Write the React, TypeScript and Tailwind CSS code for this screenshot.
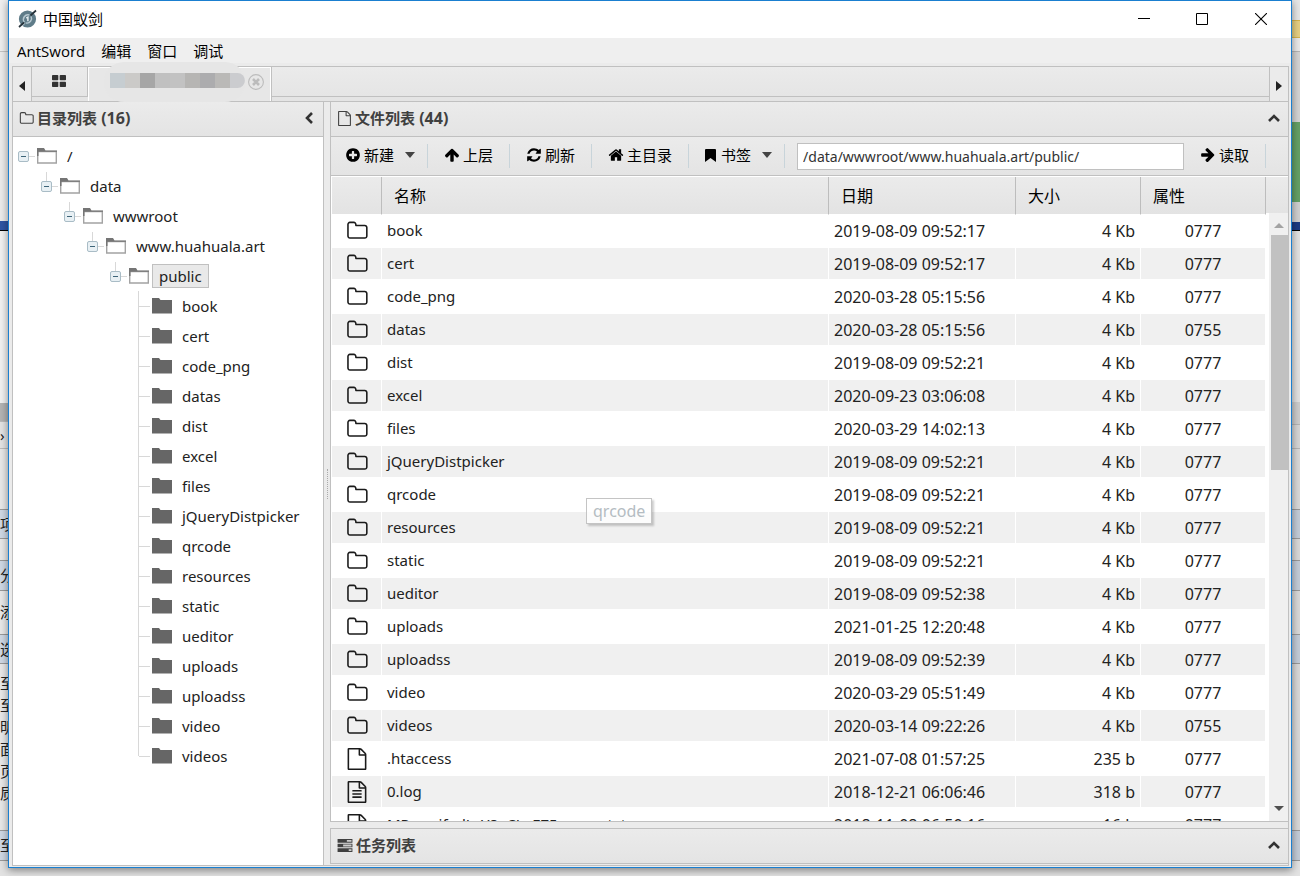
import type { ReactNode } from "react";

/* ---------- data ---------- */

const folders = [
  { name: "book", date: "2019-08-09 09:52:17", mode: "0777" },
  { name: "cert", date: "2019-08-09 09:52:17", mode: "0777" },
  { name: "code_png", date: "2020-03-28 05:15:56", mode: "0777" },
  { name: "datas", date: "2020-03-28 05:15:56", mode: "0755" },
  { name: "dist", date: "2019-08-09 09:52:21", mode: "0777" },
  { name: "excel", date: "2020-09-23 03:06:08", mode: "0777" },
  { name: "files", date: "2020-03-29 14:02:13", mode: "0777" },
  { name: "jQueryDistpicker", date: "2019-08-09 09:52:21", mode: "0777" },
  { name: "qrcode", date: "2019-08-09 09:52:21", mode: "0777" },
  { name: "resources", date: "2019-08-09 09:52:21", mode: "0777" },
  { name: "static", date: "2019-08-09 09:52:21", mode: "0777" },
  { name: "ueditor", date: "2019-08-09 09:52:38", mode: "0777" },
  { name: "uploads", date: "2021-01-25 12:20:48", mode: "0777" },
  { name: "uploadss", date: "2019-08-09 09:52:39", mode: "0777" },
  { name: "video", date: "2020-03-29 05:51:49", mode: "0777" },
  { name: "videos", date: "2020-03-14 09:22:26", mode: "0755" },
];

const rows = [
  ...folders.map((f) => ({ ...f, size: "4 Kb", icon: "folder" as IconName })),
  { name: ".htaccess", date: "2021-07-08 01:57:25", size: "235 b", mode: "0777", icon: "file" as IconName },
  { name: "0.log", date: "2018-12-21 06:06:46", size: "318 b", mode: "0777", icon: "fileText" as IconName },
  { name: "MP_verify_lLcY8aCLeEZ5manm.txt", date: "2018-11-08 06:50:16", size: "16 b", mode: "0777", icon: "fileText" as IconName },
];

// open branches of the tree, from the root down
const branches = [
  { name: "/", indent: "pl-[5px]" },
  { name: "data", indent: "pl-[28px]" },
  { name: "wwwroot", indent: "pl-[51px]" },
  { name: "www.huahuala.art", indent: "pl-[74px]" },
  { name: "public", indent: "pl-[97px]" },
];

/* ---------- icons ---------- */

type IconName = "folder" | "file" | "fileText" | "plus" | "up" | "refresh" | "home";

const FILE =
  "M1596 380q28 28 48 76t20 88v1152q0 40-28 68t-68 28h-1344q-40 0-68-28t-28-68v-1600q0-40 28-68t68-28h896q40 0 88 20t76 48zm-444-244v376h376q-10-29-22-41l-313-313q-12-12-41-22zm384 1528v-1024h-416q-40 0-68-28t-28-68v-416h-768v1536h1280z";

const paths: Record<IconName, string> = {
  folder:
    "M1632 1312v-704q0-40-28-68t-68-28h-704q-40 0-68-28t-28-68v-64q0-40-28-68t-68-28h-320q-40 0-68 28t-28 68v960q0 40 28 68t68 28h1216q40 0 68-28t28-68zm128-704v704q0 92-66 158t-158 66h-1216q-92 0-158-66t-66-158v-960q0-92 66-158t158-66h320q92 0 158 66t66 158v32h672q92 0 158 66t66 158z",
  file: FILE,
  fileText: FILE + "M544 736h704q32 0 32 32v64q0 32-32 32h-704q-32 0-32-32v-64q0-32 32-32zM544 992h704q32 0 32 32v64q0 32-32 32h-704q-32 0-32-32v-64q0-32 32-32zM544 1248h704q32 0 32 32v64q0 32-32 32h-704q-32 0-32-32v-64q0-32 32-32z",
  plus:
    "M1344 960v-128q0-26-19-45t-45-19h-256v-256q0-26-19-45t-45-19h-128q-26 0-45 19t-19 45v256h-256q-26 0-45 19t-19 45v128q0 26 19 45t45 19h256v256q0 26 19 45t45 19h128q26 0 45-19t19-45v-256h256q26 0 45-19t19-45zm320-64q0 209-103 385.5t-279.5 279.5-385.5 103-385.5-103-279.5-279.5-103-385.5 103-385.5 279.5-279.5 385.5-103 385.5 103 279.5 279.5 103 385.5z",
  up: "M1675 971q0 51-37 90l-75 75q-38 38-91 38-54 0-90-38l-294-293v704q0 52-37.5 84.5t-90.5 32.5h-128q-53 0-90.5-32.5t-37.5-84.5v-704l-294 293q-36 38-90 38t-90-38l-75-75q-38-38-38-90 0-53 38-91l651-651q35-37 90-37 54 0 91 37l651 651q37 39 37 91z",
  refresh:
    "M1639 1056q0 5-1 7-64 268-268 434.5t-478 166.5q-146 0-282.5-55t-243.5-157l-129 129q-19 19-45 19t-45-19-19-45v-448q0-26 19-45t45-19h448q26 0 45 19t19 45-19 45l-137 137q71 66 161 102t187 36q134 0 250-65t186-179q11-17 53-117 8-23 30-23h192q13 0 22.5 9.5t9.5 22.5zm25-800v448q0 26-19 45t-45 19h-448q-26 0-45-19t-19-45 19-45l138-138q-148-137-349-137-134 0-250 65t-186 179q-11 17-53 117-8 23-30 23h-199q-13 0-22.5-9.5t-9.5-22.5v-7q65-268 270-434.5t480-166.5q146 0 284 55.5t245 156.5l130-129q19-19 45-19t45 19 19 45z",
  home:
    "M1472 992v480q0 26-19 45t-45 19h-384v-384h-256v384h-384q-26 0-45-19t-19-45v-480q0-1 .5-3t.5-3l575-474 575 474q1 2 1 6zm223-69l-62 74q-8 9-21 11h-3q-13 0-21-7l-692-577-692 577q-12 8-24 7-13-2-21-11l-62-74q-8-10-7-23.5t11-21.5l719-599q32-26 76-26t76 26l244 204v-195q0-14 9-23t23-9h192q14 0 23 9t9 23v408l219 182q10 8 11 21.5t-7 23.5z",
};

function Icon({ name, className = "size-4" }: { name: IconName; className?: string }) {
  return (
    <svg viewBox="0 0 1792 1792" fill="currentColor" className={`shrink-0 ${className}`} aria-hidden="true">
      <path d={paths[name]} />
    </svg>
  );
}

function Chevron({ className = "" }: { className?: string }) {
  return (
    <svg viewBox="0 0 12 12" className={`size-3 ${className}`} fill="none" stroke="#333" strokeWidth="2.6" aria-hidden="true">
      <path d="M1 9 6 4l5 5" />
    </svg>
  );
}

function Caret() {
  return (
    <svg viewBox="0 0 10 6" className="ml-2 h-[6px] w-[10px]" fill="#444" aria-hidden="true">
      <path d="M0 0h10L5 6z" />
    </svg>
  );
}

function Logo() {
  return (
    <svg viewBox="0 0 20 20" className="size-5" aria-hidden="true">
      <circle cx="9.500" cy="10" r="8.600" fill="#5f7c89" />
      <path d="M6.400 13.200a4.600 4.600 0 0 1 5-7.200M13 7.400a4.600 4.600 0 0 1-5 6.600" fill="none" stroke="#b9cad2" strokeWidth="1.400" />
      <path d="M8.300 9l1.600-.8v4" fill="none" stroke="#e3ecef" strokeWidth="1.500" />
      <path d="M1 18 6 13.500M12.500 6.500 18 1.500" stroke="#26323a" strokeWidth="1.700" />
      <path d="M2.500 18.500 7.500 14" stroke="#dfe7ea" strokeWidth=".7" />
    </svg>
  );
}

/* ---------- desktop behind the window ---------- */

const strips = [
  { h: "h-[51px]", c: "bg-[#efefef]", t: "" },
  { h: "h-[170px]", c: "border-t border-[#c4c4c4] bg-[#ececec]", t: "" },
  { h: "h-[10px]", c: "border-b border-black bg-[#2f55a4]", t: "" },
  { h: "h-[172px]", c: "bg-[#f2f2f2]", t: "" },
  { h: "h-[18px]", c: "bg-[#b4b4b4]", t: "" },
  { h: "h-[28px]", c: "border-y border-[#bbb] bg-[#e4e4e4]", t: "›" },
  { h: "h-[60px]", c: "bg-[#e9e9e9]", t: "" },
  { h: "h-[30px]", c: "border-y border-[#999] bg-[#cfd9e5]", t: "项" },
  { h: "h-[21px]", c: "bg-[#e9e9e9]", t: "" },
  { h: "h-[31px]", c: "border-y border-[#999] bg-[#cfd9e5]", t: "分" },
  { h: "h-[43px]", c: "bg-[#e9e9e9]", t: "添" },
  { h: "h-[30px]", c: "border-y border-[#999] bg-[#cfd9e5]", t: "选" },
  { h: "h-[8px]", c: "bg-[#e9e9e9]", t: "" },
  { h: "h-[22px]", c: "bg-[#e9e9e9]", t: "至" },
  { h: "h-[22px]", c: "bg-[#e9e9e9]", t: "至" },
  { h: "h-[22px]", c: "bg-[#e9e9e9]", t: "明" },
  { h: "h-[22px]", c: "bg-[#e9e9e9]", t: "面" },
  { h: "h-[22px]", c: "bg-[#e9e9e9]", t: "页" },
  { h: "h-[22px]", c: "bg-[#e9e9e9]", t: "质" },
  { h: "h-[26px]", c: "bg-[#e9e9e9]", t: "" },
  { h: "h-[31px]", c: "border-y border-[#999] bg-[#cfd9e5]", t: "至" },
];

const rightStrips = [
  { h: "h-[20px]", c: "bg-[#e6e6e6]" },
  { h: "h-[18px]", c: "border-y border-[#d5b44e] bg-[#e6cf82]" },
  { h: "h-[13px]", c: "bg-[#e9e9e9]" },
  { h: "h-[71px]", c: "border-t border-[#b5b5b5] bg-[#d4d4d4]" },
  { h: "h-[80px]", c: "bg-[#65a066]" },
  { h: "h-[20px]", c: "bg-[#d0d0d0]" },
  { h: "h-[9px]", c: "border-b border-black bg-[#1b3a83]" },
  { h: "h-[171px]", c: "bg-[#e2e2e2]" },
  { h: "h-[22px]", c: "bg-[#cdcdcd]" },
  { h: "h-[25px]", c: "border-y border-[#b5b5b5] bg-[#d6d6d6]" },
  { h: "h-[60px]", c: "bg-[#d9d9d9]" },
  { h: "h-[30px]", c: "border-y border-[#999] bg-[#c3ccd8]" },
  { h: "h-[21px]", c: "bg-[#d9d9d9]" },
  { h: "h-[31px]", c: "border-y border-[#999] bg-[#c3ccd8]" },
  { h: "h-[43px]", c: "bg-[#d9d9d9]" },
  { h: "h-[30px]", c: "border-y border-[#999] bg-[#c3ccd8]" },
  { h: "h-[166px]", c: "bg-[#d9d9d9]" },
  { h: "h-[31px]", c: "border-y border-[#999] bg-[#c3ccd8]" },
];

/* ---------- building blocks ---------- */

interface PanelHeaderProps {
  icon: ReactNode;
  title: string;
  count?: number;
  chevron?: string;
}

function PanelHeader({ icon, title, count, chevron = "" }: PanelHeaderProps) {
  return (
    <header className="flex h-[35px] shrink-0 items-center gap-[3px] border-b border-[#c0c0c0] bg-linear-to-b from-[#ebebeb] to-[#e4e4e4] pr-2 pb-[2px] pl-[6px] text-[#404040]">
      {icon}
      <h2 className="flex-1 text-[15px] font-semibold">
        {title}
        {count !== undefined && <span className="text-base font-bold"> ({count})</span>}
      </h2>
      <button type="button" aria-label="collapse">
        <Chevron className={chevron} />
      </button>
    </header>
  );
}

function ToolButton({ icon, children, caret = false }: { icon: ReactNode; children: ReactNode; caret?: boolean }) {
  return (
    <button
      type="button"
      className={`flex h-6 items-center gap-[3px] border-r border-[#c8d4da] pb-[2px] text-[15px] text-black ${caret ? "pr-3 pl-[14px]" : "pr-4 pl-4"}`}
    >
      {icon}
      <span>{children}</span>
      {caret && <Caret />}
    </button>
  );
}

function OpenFolder() {
  return (
    <svg viewBox="0 0 20 16" className="h-4 w-5" aria-hidden="true">
      <path d="M.7 2v13h18.600V3.500H.7" fill="#fff" stroke="#a3a3a3" strokeWidth="1.400" />
      <path d="M0 0h7l1.500 2.500H20v1.200H1.500V8H0z" fill="#757575" />
    </svg>
  );
}

function ClosedFolder() {
  return (
    <svg viewBox="0 0 20 16" className="h-4 w-5" aria-hidden="true">
      <path d="M0 0h7l1.500 2H20v13.500H0z" fill="#666" />
    </svg>
  );
}

function Tree() {
  return (
    <ul className="flex-1 overflow-hidden bg-white pt-1 text-[15px] text-[#222]">
      {branches.map((b, i) => (
        <li key={b.name} className={`flex h-[30px] items-center ${b.indent}`}>
          <span className="relative flex size-[11px] items-center justify-center rounded-[2px] border border-[#a9bcc6] bg-[#e8f0f4]">
            <span className="h-px w-[5px] bg-[#3d6478]" />
            {i > 0 && <span className="absolute bottom-[10px] left-1 h-[9px] w-px bg-[#d8d8d8]" />}
          </span>
          <span className="mr-[2px] h-px w-[6px] bg-[#d8d8d8]" />
          <OpenFolder />
          <span
            className={`ml-[3px] border px-[6px] leading-[22px] ${
              b.name === "public" ? "border-[#c0c0c0] bg-[#e9e9e9]" : "border-transparent"
            }`}
          >
            {b.name}
          </span>
        </li>
      ))}
      {folders.map((f, i) => (
        <li key={f.name} className="flex h-[30px] pl-[125px]">
          <span className={`w-px bg-[#d8d8d8] ${i === folders.length - 1 ? "h-[15px]" : "h-[30px]"}`} />
          <span className="mt-[15px] mr-[2px] h-px w-[11px] bg-[#d8d8d8]" />
          <span className="flex items-center pb-px">
            <ClosedFolder />
          </span>
          <span className="ml-[10px] leading-[31px]">{f.name}</span>
        </li>
      ))}
    </ul>
  );
}

function FileTable() {
  return (
    <div className="flex min-h-0 flex-1 overflow-hidden border-t border-l border-white bg-white">
      <table className="w-full table-fixed border-separate border-spacing-0 self-start text-base text-[#222]">
        <colgroup>
          <col className="w-[50px]" />
          <col />
          <col className="w-[187px]" />
          <col className="w-[125px]" />
          <col className="w-[125px]" />
        </colgroup>
        <thead>
          <tr className="h-[38px] text-left [&>th]:border-r [&>th]:border-b [&>th]:border-r-[#bdbdbd] [&>th]:border-b-white [&>th]:bg-linear-to-b [&>th]:from-[#ebebeb] [&>th]:to-[#e3e3e3] [&>th]:pl-3 [&>th]:font-normal [&>th]:text-black">
            <th aria-label="type" />
            <th>名称</th>
            <th>日期</th>
            <th>大小</th>
            <th>属性</th>
          </tr>
        </thead>
        <tbody>
          {rows.map((r) => (
            <tr key={r.name} className="h-[33px] even:bg-[#f0f0f0] [&>td]:border-r [&>td]:border-b-2 [&>td]:border-white [&>td]:p-0">
              <td>
                <Icon name={r.icon} className="mx-auto size-[22px] text-[#1a1a1a]" />
              </td>
              <td>
                <div className="pb-px pl-[5px] text-[15px] leading-6">{r.name}</div>
              </td>
              <td>
                <span className="pl-[5px]">{r.date}</span>
              </td>
              <td className="text-right">
                <span className="pr-[5px]">{r.size}</span>
              </td>
              <td className="text-center">{r.mode}</td>
            </tr>
          ))}
        </tbody>
      </table>
      <div className="flex w-[22px] shrink-0 flex-col">
        <div className="h-[36px] shrink-0 bg-linear-to-b from-[#ebebeb] to-[#e3e3e3]" />
        <div className="ml-[3px] flex flex-1 flex-col items-center bg-[#f0f0f0]">
          <svg viewBox="0 0 10 5" className="mt-[10px] mb-[7px] h-[5px] w-[10px]" fill="#a3a3a3" aria-hidden="true">
            <path d="M0 5h10L5 0z" />
          </svg>
          <div className="ml-[2px] h-[235px] w-[17px] bg-[#c1c1c1]" />
          <svg viewBox="0 0 10 5" className="mt-auto mb-[10px] h-[5px] w-[10px]" fill="#505050" aria-hidden="true">
            <path d="M0 0h10L5 5z" />
          </svg>
        </div>
      </div>
    </div>
  );
}

function TitleBar() {
  return (
    <div className="flex h-[37px] shrink-0 items-center bg-white pb-px pl-[9px]">
      <Logo />
      <h1 className="ml-[5px] flex-1 text-[15px] text-black">中国蚁剑</h1>
      <button type="button" aria-label="minimize" className="flex w-[58px] justify-center">
        <svg viewBox="0 0 12 12" className="size-3" stroke="#000">
          <path d="M0 5.500h12" />
        </svg>
      </button>
      <button type="button" aria-label="maximize" className="flex w-[58px] justify-center">
        <svg viewBox="0 0 12 12" className="size-3" fill="none" stroke="#000">
          <path d="M.5.5h11v11H.5z" />
        </svg>
      </button>
      <button type="button" aria-label="close" className="flex w-[60px] justify-center">
        <svg viewBox="0 0 12 12" className="size-3" stroke="#000" strokeWidth="1.100">
          <path d="M0 0l12 12M12 0 0 12" />
        </svg>
      </button>
    </div>
  );
}

// colours of the pixelated tab caption
const mosaic = [
  "bg-[#c6cdd1]", "bg-[#cbcac8]", "bg-[#a6a6a6]", "bg-[#c0c0c0]", "bg-[#c2c2c2]",
  "bg-[#b6b5b3]", "bg-[#acacae]", "bg-[#bab9b7]", "bg-[#cbcccf]",
];

function TabBar() {
  return (
    <div className="flex h-[35px] shrink-0 border-b border-[#c0c0c0] bg-[#e4e4e4]">
      <button type="button" aria-label="scroll tabs left" className="flex w-[19px] shrink-0 items-center justify-center border-r border-[#c0c0c0] bg-[#ebebeb] pt-[3px]">
        <svg viewBox="0 0 6 10" className="h-[10px] w-[6px]" fill="#222">
          <path d="M6 0v10L0 5z" />
        </svg>
      </button>
      <div className="flex h-[30px] flex-1 border-b border-[#c0c0c0] bg-linear-to-b from-[#ebebeb] to-[#e5e5e5]">
        <button type="button" aria-label="home" className="flex w-[56px] items-center justify-center border-r border-[#c0c0c0] pr-px pb-px">
          <svg viewBox="0 0 14 12" className="h-3 w-[14px]" fill="#333">
            <rect width="6.300" height="5.300" rx=".8" />
            <rect x="7.700" width="6.300" height="5.300" rx=".8" />
            <rect y="6.700" width="6.300" height="5.300" rx=".8" />
            <rect x="7.700" y="6.700" width="6.300" height="5.300" rx=".8" />
          </svg>
        </button>
        <div className="flex h-[34px] w-[184px] items-start border-r border-[#c0c0c0] bg-[#e7e7e7] pl-[22px] shadow-[inset_1px_1px_0_#fff,inset_-1px_0_0_#fff]">
          {/* smudge that hides the caption; it spills over the strip's edges */}
          <div className="-mt-[5px] -ml-[6px] flex h-10 overflow-hidden rounded-[20px] bg-[#e6e6e6] pt-[11px] pl-[6px]">
            {mosaic.map((c, i) => (
              <span key={c} className={`h-[15px] w-[15px] ${c} ${i === 8 ? "rounded-r-lg" : ""}`} />
            ))}
          </div>
          <button type="button" aria-label="close tab" className="mt-[7px] ml-[3px]">
            <svg viewBox="0 0 16 16" className="size-4" fill="none" stroke="#bcbcbc">
              <circle cx="8" cy="8" r="7.400" strokeWidth="1.100" />
              <path d="M5 5l6 6M11 5l-6 6" strokeWidth="2.600" />
            </svg>
          </button>
        </div>
      </div>
      <button type="button" aria-label="scroll tabs right" className="flex w-[19px] shrink-0 items-center justify-center border-l border-[#c0c0c0] bg-[#ebebeb] pt-[3px]">
        <svg viewBox="0 0 6 10" className="h-[10px] w-[6px]" fill="#222">
          <path d="M0 0v10l6-5z" />
        </svg>
      </button>
    </div>
  );
}

export default function App() {
  return (
    <div className="flex h-screen overflow-hidden bg-[#e2e2e2] font-['Noto_Sans','Noto_Sans_CJK_SC',sans-serif]">
      <aside className="w-2 shrink-0 overflow-hidden text-[15px] text-[#222]" aria-hidden="true">
        {strips.map((s, i) => (
          <div key={i} className={`flex items-center overflow-hidden ${s.h} ${s.c}`}>
            {s.t}
          </div>
        ))}
      </aside>

      <div className="relative mb-2 flex min-w-0 flex-1 flex-col border border-[#1a7fd0] bg-[#ebebeb] shadow-[0_2px_8px_rgba(0,0,0,0.45)]">
        <TitleBar />
        <nav className="flex h-[25px] shrink-0 items-center gap-4 bg-[#efefef] pt-[2px] pl-2 font-['Open_Sans','Noto_Sans_CJK_SC',sans-serif] text-[15px] text-black">
          <button type="button">AntSword</button>
          <button type="button">编辑</button>
          <button type="button">窗口</button>
          <button type="button">调试</button>
        </nav>

        <main className="mt-[3px] mr-[2px] mb-px ml-[3px] flex min-h-0 flex-1 flex-col border border-[#c0c0c0]">
          <TabBar />
          <div className="flex min-h-0 flex-1">
            <section className="flex w-[311px] shrink-0 flex-col border-r border-[#c0c0c0]">
              <PanelHeader icon={<Icon name="folder" className="size-[15px]" />} title="目录列表" count={16} chevron="-rotate-90" />
              <Tree />
            </section>

            <div className="flex w-[6px] shrink-0 items-center justify-center">
              <span className="h-[30px] border-l border-dotted border-[#aaa]" />
            </div>

            <div className="flex min-w-0 flex-1 flex-col gap-[6px] pb-px">
              <section className="flex min-h-0 flex-1 flex-col border-b border-l border-[#c0c0c0]">
                <PanelHeader icon={<Icon name="file" className="size-[15px]" />} title="文件列表" count={44} />
                <div className="flex h-[39px] shrink-0 items-center border-b border-[#c0c0c0] bg-linear-to-b from-[#ebebeb] to-[#e4e4e4]">
                  <ToolButton icon={<Icon name="plus" />} caret>新建</ToolButton>
                  <ToolButton icon={<Icon name="up" />}>上层</ToolButton>
                  <ToolButton icon={<Icon name="refresh" />}>刷新</ToolButton>
                  <ToolButton icon={<Icon name="home" />}>主目录</ToolButton>
                  <ToolButton
                    icon={
                      <svg viewBox="0 0 11 13" className="mx-[2px] h-[13px] w-[11px]" aria-hidden="true">
                        <path d="M1 0h9q1 0 1 1v12L5.500 9 0 13V1q0-1 1-1z" />
                      </svg>
                    }
                    caret
                  >
                    书签
                  </ToolButton>
                  <input
                    type="text"
                    aria-label="path"
                    defaultValue="/data/wwwroot/www.huahuala.art/public/"
                    className="ml-3 h-[27px] min-w-0 flex-1 border border-[#c0c0c0] bg-white px-[5px] text-sm text-[#333]"
                  />
                  <div className="mr-[22px]">
                    <ToolButton icon={<Icon name="up" className="size-4 rotate-90" />}>读取</ToolButton>
                  </div>
                </div>
                <FileTable />
              </section>

              <section className="border-t border-l border-[#c0c0c0]">
                <PanelHeader
                  icon={
                    <svg viewBox="0 0 16 14" className="h-[13px] w-4" fill="#404040" aria-hidden="true">
                      <path d="M0 0h16v4H0zM0 5h16v4H0zM0 10h16v4H0z" />
                      <path d="M10 1h5v2h-5zM6 6h9v2H6zM12 11h3v2h-3z" fill="#ccc" />
                    </svg>
                  }
                  title="任务列表"
                />
              </section>
            </div>
          </div>
        </main>

        {/* drag ghost of the row being moved */}
        <div className="absolute top-[497px] left-[577px] border border-[#c4c4c4] bg-white/80 px-[6px] text-base leading-[24px] text-[#b4bcc2] shadow-[2px_2px_2px_rgba(0,0,0,0.2)]">
          qrcode
        </div>
      </div>

      <aside className="w-2 shrink-0" aria-hidden="true">
        {rightStrips.map((s, i) => (
          <div key={i} className={`${s.h} ${s.c}`} />
        ))}
      </aside>
    </div>
  );
}
